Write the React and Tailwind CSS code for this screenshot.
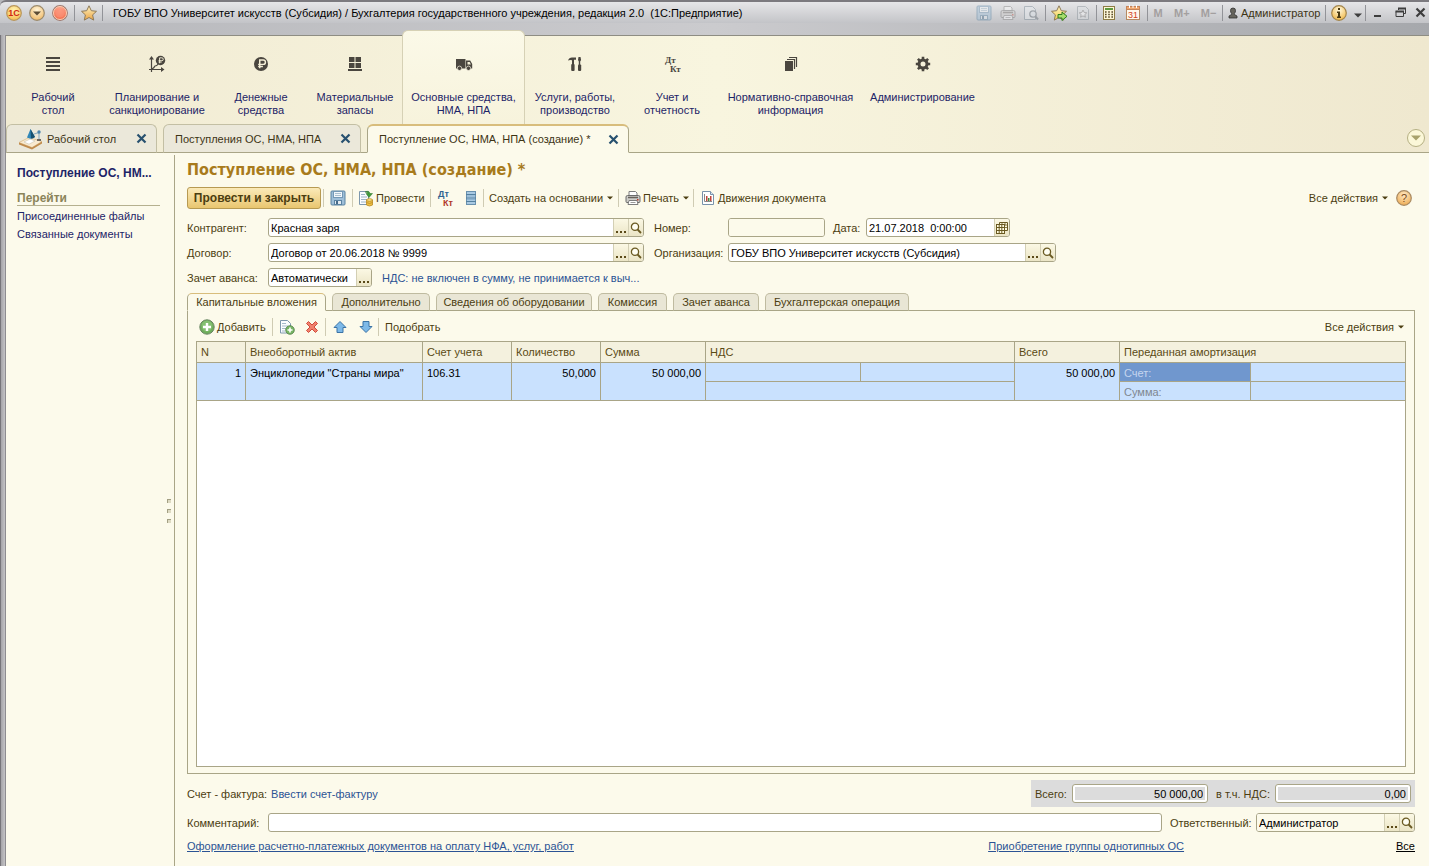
import React from "react";

const cx = (...parts) => parts.filter(Boolean).join(" ");

/* ---------- icons ---------- */

function Star({ arrow }) {
  return (
    <svg width="18" height="18" viewBox="0 0 18 18" aria-hidden="true">
      <defs>
        <linearGradient id={arrow ? "sg2" : "sg1"} x1="0" y1="0" x2="0" y2="1">
          <stop offset="0" stopColor="#fff3c0" />
          <stop offset="1" stopColor={arrow ? "#f3d050" : "#eba545"} />
        </linearGradient>
      </defs>
      <path
        d="M9 1.800l2.300 4.900 5.200.6-3.900 3.600 1.100 5.200L9 13.500l-4.700 2.600 1.100-5.200L1.500 7.300l5.200-.6z"
        fill={arrow ? "url(#sg2)" : "url(#sg1)"}
        stroke="#8e7a58"
        strokeWidth="1"
        strokeLinejoin="round"
      />
      {arrow && (
        <path d="M8 10.500h4V8l5 4.300-5 4.200V14H8z" fill="#a5dd6b" stroke="#2f7a1e" strokeLinejoin="round" />
      )}
    </svg>
  );
}

function Orb({ kind }) {
  const fills = {
    one: ["#fff3b0", "#f5b94a", "#b8955a"],
    menu: ["#fff4d8", "#efb660", "#9b8a6c"],
    red: ["#ffb09a", "#f0603e", "#9f7a70"],
    info: ["#fff8dc", "#f0b440", "#a3854c"],
    help: ["#ffe9c4", "#eda94e", "#a98a62"],
  }[kind];
  return (
    <svg width="18" height="18" viewBox="0 0 18 18" aria-hidden="true">
      <defs>
        <radialGradient id={"orb-" + kind} cx="0.5" cy="0.3" r="0.75">
          <stop offset="0" stopColor={fills[0]} />
          <stop offset="1" stopColor={fills[1]} />
        </radialGradient>
      </defs>
      <circle cx="9" cy="9" r="7.300" fill={"url(#orb-" + kind + ")"} stroke={fills[2]} strokeWidth="1.200" />
      {kind === "one" && (
        <text x="9" y="12" textAnchor="middle" fontSize="9" fontWeight="bold" fontFamily="Liberation Sans, sans-serif" fill="#d22a12">
          1С
        </text>
      )}
      {kind === "menu" && <path d="M5 7.500h8L9 11.500z" fill="#5c4c34" />}
      {kind === "red" && (
        <g>
          <circle cx="9" cy="9" r="6.500" fill="none" stroke="#f9d0b4" />
          <circle cx="9" cy="9" r="4.500" fill="#fb8f74" opacity="0.7" />
        </g>
      )}
      {kind === "info" && (
        <g fill="#4a3a12">
          <rect x="8" y="4" width="2" height="2" />
          <path d="M7 7.500h3V12.500h1V14H7v-1.500h1V9H7z" />
        </g>
      )}
      {kind === "help" && (
        <text x="9" y="13" textAnchor="middle" fontSize="11" fontFamily="Liberation Sans, sans-serif" fill="#7a4a20">
          ?
        </text>
      )}
    </svg>
  );
}

function Floppy({ muted }) {
  return (
    <svg width="16" height="16" viewBox="0 0 16 16" opacity={muted ? 0.45 : 1} aria-hidden="true">
      <rect x="1" y="1" width="14" height="14" rx="1" fill="#9fbfd8" stroke="#5b84a3" />
      <rect x="3.500" y="1.500" width="9" height="6" fill="#f2f7fb" stroke="#7398b5" />
      <path d="M5 3.500h6M5 5.500h6" stroke="#a9bfce" />
      <rect x="4.500" y="10.500" width="7" height="4" fill="#e3ebf2" stroke="#5b84a3" />
      <rect x="6" y="11" width="2" height="3" fill="#466a88" />
    </svg>
  );
}

function Printer({ muted }) {
  return (
    <svg width="16" height="16" viewBox="0 0 16 16" opacity={muted ? 0.4 : 1} aria-hidden="true">
      <path d="M4 6V1.500h6.500L12 3v3" fill="#fff" stroke="#7d7d7d" />
      <path d="M1 7Q1 5.500 2.500 5.500h11Q15 5.500 15 7v4.500q0 1-1 1H2q-1 0-1-1z" fill="#cdccc8" stroke="#6b6b6b" />
      <path d="M3 7.500h10" stroke="#66625c" strokeWidth="1.500" />
      <path d="M4 10.500h8l1 4H3z" fill="#fff" stroke="#7d7d7d" />
      <path d="M5.500 12.500h5" stroke="#9b9b9b" />
      <rect x="12" y="9" width="1.500" height="1.500" fill="#c03a2b" />
    </svg>
  );
}

function Preview() {
  return (
    <svg width="16" height="16" viewBox="0 0 16 16" opacity="0.4" aria-hidden="true">
      <path d="M1.500 1.500h8l3 3v10h-11z" fill="#e9eef2" stroke="#6d7f8c" />
      <circle cx="10" cy="9" r="3.200" fill="#dfe7ee" stroke="#545f68" strokeWidth="1.300" />
      <path d="M12.300 11.300L15 14.500" stroke="#545f68" strokeWidth="2" />
    </svg>
  );
}

function StarPage() {
  return (
    <svg width="14" height="16" viewBox="0 0 14 16" opacity="0.4" aria-hidden="true">
      <path d="M1.500 1.500h8l3 3v10h-11z" fill="#dde1e4" stroke="#7b868e" />
      <path d="M7 5l1.200 2.500 2.600.3-2 1.800.6 2.600L7 10.900l-2.400 1.300.6-2.600-2-1.800 2.600-.3z" fill="#fff" stroke="#777" />
    </svg>
  );
}

function Calculator() {
  return (
    <svg width="14" height="16" viewBox="0 0 14 16" aria-hidden="true">
      <rect x="1.500" y="1.500" width="11" height="13" fill="#fdf6d8" stroke="#8e7c45" />
      <rect x="3" y="3" width="8" height="2" fill="#5f9a40" />
      <path d="M3 7h8M3 9.500h8M3 12h8" stroke="#5a4a28" strokeWidth="1.300" strokeDasharray="1.600 1.600" />
    </svg>
  );
}

function CalendarDay() {
  return (
    <svg width="14" height="16" viewBox="0 0 14 16" aria-hidden="true">
      <rect x="0.500" y="1.500" width="13" height="13" fill="#fff8ec" stroke="#b58a62" />
      <rect x="0.500" y="1.500" width="13" height="3" fill="#f0a870" stroke="#c5845a" />
      <path d="M3.500 0v3M7 0v3M10.500 0v3" stroke="#fff" />
      <text x="7" y="13" textAnchor="middle" fontSize="9" fontFamily="Liberation Sans, sans-serif" fill="#d0411c">
        31
      </text>
    </svg>
  );
}

function Person() {
  return (
    <svg width="10" height="12" viewBox="0 0 10 12" aria-hidden="true">
      <path d="M5 1a2.500 2.500 0 0 1 2.500 2.700C7.500 5 7 5.800 6.400 6.400V7.500L9 9v2H1V9l2.600-1.500V6.400C3 5.800 2.500 5 2.500 3.700A2.500 2.500 0 0 1 5 1z" fill="#66645c" stroke="#333" strokeWidth="0.800" />
    </svg>
  );
}

function Caret({ className }) {
  return (
    <svg width="6" height="4" viewBox="0 0 6 4" className={className} aria-hidden="true">
      <path d="M0 0.500h6L3 3.500z" fill="currentColor" />
    </svg>
  );
}

function Cross({ className, size = 11 }) {
  return (
    <svg width={size} height={size} viewBox="0 0 11 11" className={className} aria-hidden="true">
      <path d="M1.500 1.500l8 8M9.500 1.500l-8 8" stroke="currentColor" strokeWidth="2.200" />
    </svg>
  );
}

function Magnifier() {
  return (
    <svg width="12" height="12" viewBox="0 0 12 12" aria-hidden="true">
      <circle cx="5" cy="4.800" r="3.600" fill="#fffef2" stroke="#6a5a22" strokeWidth="1.300" />
      <path d="M7.600 7.500L11 11" stroke="#6a5a22" strokeWidth="1.800" />
    </svg>
  );
}

function CalendarGrid() {
  return (
    <svg width="12" height="12" viewBox="0 0 12 12" aria-hidden="true">
      <path d="M3.500 3V0.500h8v8H9" fill="#fffbe0" stroke="#6a5a22" />
      <path d="M6 0.500V3M9 0.500v3M9 3h2.500M9 5.500h2.500" stroke="#6a5a22" strokeWidth="0.800" />
      <rect x="0.500" y="2.500" width="8" height="9" fill="#fffbe0" stroke="#6a5a22" />
      <path d="M0.500 5.500h8M0.500 8.500h8M3.200 2.500v9M5.800 2.500v9" stroke="#6a5a22" />
    </svg>
  );
}

function LinesIcon() {
  return (
    <svg width="16" height="16" viewBox="0 0 16 16" aria-hidden="true">
      <path d="M1 2h14M1 6h14M1 10h14M1 14h14" stroke="#4a463f" strokeWidth="2" />
    </svg>
  );
}

function Rouble({ x, y, s }) {
  return (
    <path
      transform={`translate(${x} ${y}) scale(${s})`}
      d="M5 11V3h3.300a2 2 0 0 1 0 4.200H3.500M3.500 9.200H8"
      fill="none"
      stroke="#f6f0d8"
      strokeWidth="1.400"
    />
  );
}

function PlanIcon() {
  return (
    <svg width="18" height="18" viewBox="0 0 18 18" aria-hidden="true">
      <path d="M3.500 3v14M1 14.500h13M4 14q2-1 3-3 2 0 4-3" fill="none" stroke="#4a463f" strokeWidth="1.200" />
      <path d="M1 4.500L3.500 1 6 4.500zM13 12l3.500 2.500L13 17z" fill="#4a463f" />
      <circle cx="12.500" cy="5.500" r="4.700" fill="#4a463f" />
      <Rouble x="8.200" y="0.800" s="0.680" />
    </svg>
  );
}

function MoneyIcon() {
  return (
    <svg width="16" height="16" viewBox="0 0 16 16" aria-hidden="true">
      <circle cx="8" cy="8" r="7" fill="#4a463f" />
      <Rouble x="1.500" y="0.800" s="1.050" />
    </svg>
  );
}

function StockIcon() {
  return (
    <svg width="16" height="16" viewBox="0 0 16 16" aria-hidden="true">
      <path d="M2 1h5.500v5H2zM8.500 1H14v5H8.500zM2 7h5.500v5H2zM8.500 7H14v5H8.500zM1 13h14v2H1z" fill="#4a463f" />
    </svg>
  );
}

function TruckIcon() {
  return (
    <svg width="18" height="16" viewBox="0 0 18 16" aria-hidden="true">
      <path d="M1 3h9.500v9.500H1zM11 4.500h4.200l2 3.500v4.500H11z" fill="#4a463f" />
      <path d="M12.500 6h2.200l1.200 2.500h-3.400z" fill="#f6f2da" />
      <g fill="#4a463f" stroke="#faf7e4" strokeWidth="0.700">
        <circle cx="4.500" cy="12.300" r="2.200" />
        <circle cx="13.500" cy="12.300" r="2.200" />
      </g>
    </svg>
  );
}

function ToolsIcon() {
  return (
    <svg width="16" height="16" viewBox="0 0 16 16" aria-hidden="true">
      <path d="M1 4.500q1-3 4-3h4v2.300H7V9H5V4.300Q3 3.500 1 4.500z" fill="#4a463f" />
      <rect x="4.200" y="8" width="3.400" height="7" rx="1" fill="#4a463f" />
      <path d="M11.500 1h2l.6 3-.9 1.500V9h-1.400V5.500L11 4z" fill="#4a463f" />
      <rect x="11" y="8.500" width="3.200" height="6.500" rx="1" fill="#4a463f" />
    </svg>
  );
}

function DebitCredit({ colored }) {
  return (
    <svg width="18" height="18" viewBox="0 0 18 18" aria-hidden="true">
      <g fontSize="9" fontWeight="bold" fontFamily={colored ? "Liberation Sans, sans-serif" : "Liberation Serif, serif"}>
        <text x="2" y="8" fill={colored ? "#2f6291" : "#4a463f"}>Дт</text>
        <text x="7" y="17" fill={colored ? "#b1362a" : "#4a463f"}>Кт</text>
      </g>
    </svg>
  );
}

function BooksIcon() {
  return (
    <svg width="16" height="16" viewBox="0 0 16 16" aria-hidden="true">
      <rect x="2" y="5" width="8" height="10" fill="#4a463f" />
      <path d="M4 3.500h7.500V13M6 1.500h7.500V11" fill="none" stroke="#4a463f" strokeWidth="1.200" />
    </svg>
  );
}

function GearIcon() {
  return (
    <svg width="16" height="16" viewBox="0 0 16 16" aria-hidden="true">
      <circle cx="8" cy="8" r="4" fill="none" stroke="#4a463f" strokeWidth="3" />
      <path
        d="M8 0.800v2.500M8 12.700v2.500M0.800 8h2.500M12.700 8h2.500M2.900 2.900l1.800 1.800M11.300 11.300l1.800 1.800M2.900 13.100l1.800-1.800M11.300 4.700l1.800-1.800"
        stroke="#4a463f"
        strokeWidth="2.600"
      />
    </svg>
  );
}

function DeskIcon() {
  return (
    <svg width="26" height="22" viewBox="0 0 26 22" aria-hidden="true">
      <path d="M1 14.500L11 9.500l13 4-10 6z" fill="#f9ead0" stroke="#d8bb8a" strokeWidth="0.800" />
      <path d="M1 14.500v2l13 5v-2zM24 13.500v2l-10 6v-2z" fill="#c08b4c" />
      <path d="M6 14l6-3 5 2-6 3.200z" fill="#fff" stroke="#c8c2ae" strokeWidth="0.600" />
      <path d="M9 9.500L12.500 1 17 9q-4 3-8 .5z" fill="#2f86b8" />
      <path d="M12.500 1L17 9q-2 1.500-4 1.500z" fill="#17506f" />
      <path d="M16 6l5-1.500v7" fill="none" stroke="#8fb0c4" strokeWidth="1.200" />
      <circle cx="21" cy="4" r="1.700" fill="#4d86ad" />
      <path d="M19 11h4v2h-4z" fill="#6d675e" />
    </svg>
  );
}

function PostIcon() {
  return (
    <svg width="16" height="17" viewBox="0 0 16 17" aria-hidden="true">
      <path d="M1.500 1.500h9v13h-9z" fill="#fafcff" stroke="#7d97ad" />
      <path d="M3 4.500h4M3 7h6M3 9.500h6M3 12h5" stroke="#9db4c6" />
      <path d="M7 2q4-2 5 1.500h2.500L11 7.500 8 3.500h2Q9.500 2 7 2z" fill="#3f9a3a" stroke="#2d7029" strokeWidth="0.500" />
      <path d="M8.500 10v5q3 2 6 0v-5z" fill="#eec045" stroke="#b98a22" strokeWidth="0.800" />
      <ellipse cx="11.500" cy="10" rx="3" ry="1.300" fill="#fbe389" stroke="#b98a22" strokeWidth="0.800" />
      <path d="M8.500 12.500q3 2 6 0" fill="none" stroke="#b98a22" strokeWidth="0.800" />
    </svg>
  );
}

function RegisterIcon() {
  return (
    <svg width="12" height="16" viewBox="0 0 12 16" aria-hidden="true">
      <rect x="1.500" y="1.500" width="9" height="13" fill="#a9c9e2" stroke="#6a91ae" />
      <path d="M1 4.500h10M1 8h10M1 11.500h10" stroke="#54809f" />
      <path d="M2 6h8M2 9.500h8" stroke="#8fb4d0" />
    </svg>
  );
}

function ReportIcon() {
  return (
    <svg width="14" height="16" viewBox="0 0 14 16" aria-hidden="true">
      <path d="M1.500 1.500h8l3 3v10h-11z" fill="#fff" stroke="#7893ab" />
      <path d="M9.500 1.500v3h3" fill="#dbe7f0" stroke="#7893ab" />
      <path d="M3.500 4v7.500h7.500" fill="none" stroke="#888" />
      <path d="M5 6h1.500v5H5z" fill="#c1443a" />
      <path d="M7 8h1.500v3H7z" fill="#418a3e" />
      <path d="M9 6h1.500v5H9z" fill="#c1443a" />
    </svg>
  );
}

function AddIcon() {
  return (
    <svg width="16" height="16" viewBox="0 0 16 16" aria-hidden="true">
      <circle cx="8" cy="8" r="7.200" fill="#6fae5c" stroke="#6a8563" />
      <circle cx="8" cy="7" r="5.500" fill="#93c97f" opacity="0.6" />
      <path d="M8 4v8M4 8h8" stroke="#fff" strokeWidth="2.400" />
    </svg>
  );
}

function CopyAddIcon() {
  return (
    <svg width="16" height="16" viewBox="0 0 16 16" aria-hidden="true">
      <path d="M1.500 1.500h7l3 3v9.500h-10z" fill="#fbfdff" stroke="#7d97ad" />
      <path d="M3 4.500h4M3 7h6M3 9.500h4M3 12h3" stroke="#a5bacb" />
      <circle cx="11" cy="11" r="4.300" fill="#78b565" stroke="#4f7f45" strokeWidth="0.800" />
      <path d="M11 8.500v5M8.500 11h5" stroke="#fff" strokeWidth="1.600" />
    </svg>
  );
}

function DeleteIcon() {
  return (
    <svg width="14" height="14" viewBox="0 0 14 14" aria-hidden="true">
      <path d="M1.500 3.500l2-2L7 5l3.500-3.500 2 2L9 7l3.500 3.500-2 2L7 9l-3.500 3.500-2-2L5 7z" fill="#f0806c" stroke="#cf4a3c" strokeLinejoin="round" />
    </svg>
  );
}

function ArrowIcon({ down }) {
  return (
    <svg width="14" height="14" viewBox="0 0 14 14" className={down ? "rotate-180" : ""} aria-hidden="true">
      <path d="M7 1.500l6 6h-3v5H4v-5H1z" fill="#7db9e8" stroke="#3b73a6" strokeLinejoin="round" />
    </svg>
  );
}

/* ---------- small building blocks ---------- */

function BarSep() {
  return <span className="h-4 w-px shrink-0 bg-[#929398]" />;
}

function ToolSep({ className }) {
  return <span className={cx("h-[18px] w-px shrink-0 bg-[#cfcbb3]", className)} />;
}

function IconButton({ label, children, className }) {
  return (
    <button type="button" aria-label={label} className={cx("flex shrink-0 items-center justify-center", className)}>
      {children}
    </button>
  );
}

function Field({ id, value, className, inputClass, more, search, calendar, readOnly }) {
  const side =
    "flex w-[15px] shrink-0 items-center justify-center border-l border-[#d3cfb4] bg-linear-to-b from-[#fbf8e4] to-[#ebe5c6]";
  return (
    <div className={cx("flex h-[19px] overflow-hidden rounded-[3px] border border-[#a9a587] bg-white", className)}>
      <input id={id} defaultValue={value} readOnly={readOnly} className={cx("min-w-0 flex-1 px-[2px] text-black outline-none", inputClass)} />
      {more && (
        <button type="button" aria-label="Выбрать" className={side}>
          <svg width="10" height="12" viewBox="0 0 10 12" aria-hidden="true">
            <path d="M0 9h2v2H0zM4 9h2v2H4zM8 9h2v2H8z" fill="#5b4a18" />
          </svg>
        </button>
      )}
      {search && (
        <button type="button" aria-label="Открыть" className={side}>
          <Magnifier />
        </button>
      )}
      {calendar && (
        <button type="button" aria-label="Календарь" className={side}>
          <CalendarGrid />
        </button>
      )}
    </div>
  );
}

/* ---------- page parts ---------- */

function TitleBar() {
  return (
    <header className="flex h-[35px] flex-col bg-linear-to-r from-[#b6b7bb] via-[#cbcbce] to-[#a6a8ac]">
      <div className="flex h-[23px] items-center rounded-tl-md border-t-2 border-[#7c7a7f] bg-linear-to-b from-[#e6e6e8] to-[#c3c4c8] pl-[2px]">
        <IconButton label="Главное меню" className="w-[23px]"><Orb kind="one" /></IconButton>
        <IconButton label="Меню" className="w-[23px]"><Orb kind="menu" /></IconButton>
        <IconButton label="Закрыть приложение" className="w-[23px]"><Orb kind="red" /></IconButton>
        <span className="w-[3px]" />
        <BarSep />
        <IconButton label="Избранное" className="w-[27px]"><Star /></IconButton>
        <BarSep />
        <h1 className="flex-1 truncate pl-[10px] whitespace-pre text-black">
          ГОБУ ВПО Университет искусств (Субсидия) / Бухгалтерия государственного учреждения, редакция 2.0{"  "}(1С:Предприятие)
        </h1>
        <IconButton label="Сохранить" className="w-6"><Floppy muted /></IconButton>
        <IconButton label="Печать" className="w-6"><Printer muted /></IconButton>
        <IconButton label="Просмотр" className="mr-[3px] w-[22px]"><Preview /></IconButton>
        <BarSep />
        <IconButton label="Добавить в избранное" className="w-[26px]"><Star arrow /></IconButton>
        <IconButton label="Ссылка" className="mr-[2px] w-[22px]"><StarPage /></IconButton>
        <BarSep />
        <IconButton label="Калькулятор" className="w-[24px]"><Calculator /></IconButton>
        <IconButton label="Календарь" className="mr-[2px] w-[24px]"><CalendarDay /></IconButton>
        <BarSep />
        <div className="flex w-[74px] items-center justify-around font-bold text-[#a39f9f]">
          <button type="button">M</button>
          <button type="button">M+</button>
          <button type="button">M−</button>
        </div>
        <BarSep />
        <button type="button" className="flex w-[102px] items-center gap-[3px] pl-[5px] text-[#3d3415]">
          <Person />
          Администратор
        </button>
        <BarSep />
        <IconButton label="Информация" className="w-[25px]"><Orb kind="info" /></IconButton>
        <IconButton label="Ещё" className="w-[14px] pt-[6px] text-[#3d3d3d]">
          <svg width="8" height="5" viewBox="0 0 8 5" aria-hidden="true"><path d="M0 0.500h8L4 4.500z" fill="currentColor" /></svg>
        </IconButton>
        <BarSep />
        <IconButton label="Свернуть" className="w-[23px]">
          <svg width="8" height="8" viewBox="0 0 8 8" aria-hidden="true"><path d="M0 7h7" stroke="#3d3d3d" strokeWidth="2" /></svg>
        </IconButton>
        <IconButton label="Восстановить" className="w-[23px]">
          <svg width="12" height="11" viewBox="0 0 12 11" aria-hidden="true">
            <path d="M3.500 3V1.500h7v5H9M1 4.500h7.500v5H1z" fill="none" stroke="#3d3d3d" />
            <path d="M3 1.500h8M0.500 4.500h8.500" stroke="#3d3d3d" strokeWidth="2" />
          </svg>
        </IconButton>
        <IconButton label="Закрыть" className="w-[17px] text-[#3d3d3d]"><Cross /></IconButton>
      </div>
    </header>
  );
}

const sections = [
  { icon: <LinesIcon />, lines: ["Рабочий", "стол"], width: "w-[94px]" },
  { icon: <PlanIcon />, lines: ["Планирование и", "санкционирование"], width: "w-[114px]" },
  { icon: <MoneyIcon />, lines: ["Денежные", "средства"], width: "w-[94px]" },
  { icon: <StockIcon />, lines: ["Материальные", "запасы"], width: "w-[94px]" },
  { icon: <TruckIcon />, lines: ["Основные средства,", "НМА, НПА"], width: "w-[123px]", active: true },
  { icon: <ToolsIcon />, lines: ["Услуги, работы,", "производство"], width: "w-[100px]" },
  { icon: <DebitCredit />, lines: ["Учет и", "отчетность"], width: "w-[94px]" },
  { icon: <BooksIcon />, lines: ["Нормативно-справочная", "информация"], width: "w-[143px]" },
  { icon: <GearIcon />, lines: ["Администрирование"], width: "w-[121px]" },
];

function Ribbon() {
  return (
    <nav className="flex h-[89px] border-t border-[#8e8d83] bg-linear-to-r from-[#f1ebd3] via-[#f8f5df] to-[#efe8cf]">
      {sections.map((s) => (
        <a
          key={s.lines[0]}
          href="#"
          className={cx(
            "-mt-[6px] flex shrink-0 flex-col items-center rounded-t-[6px] border pt-[23px] text-center whitespace-nowrap text-[#1d2467]",
            s.width,
            s.active
              ? "border-b-0 border-[#d6d1b5] bg-linear-to-b from-[#fbf9e8] to-[#f7f3dc]"
              : "border-transparent"
          )}
        >
          <span className="flex h-[20px] items-center justify-center">{s.icon}</span>
          <span className="mt-[17px] leading-[13px]">
            {s.lines.map((l) => (
              <span key={l} className="block">{l}</span>
            ))}
          </span>
        </a>
      ))}
    </nav>
  );
}

function DocTab({ width, icon, title, active }) {
  return (
    <div
      className={cx(
        "flex h-full shrink-0 items-center justify-between rounded-t-[6px] border pr-[9px] pl-[11px] text-[#3d3415]",
        width,
        active
          ? "border-t-2 border-[#a9a587] border-t-[#d8bd7c] border-b-[#fcfaeb] bg-[#fcfaeb]"
          : "border-[#c3bfa4] border-b-[#a9a587] bg-[#ebe8da]"
      )}
    >
      <button type="button" className="flex items-center gap-[3px] whitespace-nowrap">
        {icon}
        {title}
      </button>
      <IconButton label="Закрыть вкладку" className="text-[#27506f]"><Cross /></IconButton>
    </div>
  );
}

function DocTabs() {
  return (
    <div className="flex h-[29px] bg-linear-to-r from-[#f1ebd3] via-[#f8f5df] to-[#efe8cf]">
      <DocTab width="w-[151px]" icon={<DeskIcon />} title="Рабочий стол" />
      <span className="w-[6px] border-b border-[#a9a587]" />
      <DocTab width="w-[198px]" title="Поступления ОС, НМА, НПА" />
      <span className="w-[6px] border-b border-[#a9a587]" />
      <DocTab width="w-[262px]" title="Поступление ОС, НМА, НПА (создание) *" active />
      <div className="flex flex-1 items-center justify-end border-b border-[#a9a587] pr-[4px]">
        <button
          type="button"
          aria-label="Список окон"
          className="flex h-[18px] w-[18px] items-center justify-center rounded-full border border-[#b5b083] bg-[#fbf7d8] text-[#a8a26c]"
        >
          <svg width="10" height="6" viewBox="0 0 10 6" aria-hidden="true"><path d="M0 0.500h10L5 5.500z" fill="currentColor" /></svg>
        </button>
      </div>
    </div>
  );
}

function Sidebar() {
  return (
    <aside className="mt-[2px] flex w-[169px] shrink-0 border-r border-[#a9a587] pl-[11px] text-[#1d2467]">
      <div className="flex-1 pt-[10px]">
        <div className="w-[143px] whitespace-nowrap">
          <a href="#" className="block text-[12px] leading-[16px] font-bold">Поступление ОС, НМ...</a>
          <h2 className="mt-[11px] border-b border-[#b5b08f] text-[12px] leading-[13px] font-bold text-[#8b8459]">Перейти</h2>
        </div>
        <a href="#" className="mt-px block leading-[18px]">Присоединенные файлы</a>
        <a href="#" className="block leading-[18px]">Связанные документы</a>
      </div>
      <div className="flex w-[7px] flex-col justify-center gap-[6px]">
        <span className="h-1 w-1 border-t border-l border-[#a39f83] bg-[#dedac2]" />
        <span className="h-1 w-1 border-t border-l border-[#a39f83] bg-[#dedac2]" />
        <span className="h-1 w-1 border-t border-l border-[#a39f83] bg-[#dedac2]" />
      </div>
    </aside>
  );
}

function Toolbar() {
  return (
    <div className="flex h-[22px] items-center text-[#4b3d10]">
      <button
        type="button"
        className="h-full w-[134px] rounded-[3px] border border-[#b79a52] bg-linear-to-b from-[#fbeab8] to-[#e9c66f] text-[12px] font-bold whitespace-nowrap"
      >
        Провести и закрыть
      </button>
      <ToolSep className="ml-[2px]" />
      <IconButton label="Записать" className="w-[28px]"><Floppy /></IconButton>
      <ToolSep />
      <button type="button" className="flex w-[77px] items-center gap-[2px] pl-[5px] whitespace-nowrap">
        <PostIcon />
        Провести
      </button>
      <ToolSep />
      <IconButton label="Проводки" className="w-[28px]"><DebitCredit colored /></IconButton>
      <IconButton label="Регистр" className="w-[24px]"><RegisterIcon /></IconButton>
      <ToolSep />
      <button type="button" className="flex w-[134px] items-center gap-[4px] pl-[5px] whitespace-nowrap">
        Создать на основании
        <Caret />
      </button>
      <ToolSep />
      <button type="button" className="flex w-[74px] items-center gap-[2px] pl-[6px] whitespace-nowrap">
        <Printer />
        Печать
        <Caret className="ml-[2px]" />
      </button>
      <ToolSep />
      <button type="button" className="flex items-center gap-[3px] pl-[7px] whitespace-nowrap">
        <ReportIcon />
        Движения документа
      </button>
      <button type="button" className="ml-auto flex items-center gap-[4px] whitespace-nowrap">
        Все действия
        <Caret />
      </button>
      <IconButton label="Справка" className="mr-[2px] ml-[7px]"><Orb kind="help" /></IconButton>
    </div>
  );
}

function HeaderForm() {
  return (
    <div className="mt-[9px] flex flex-col gap-[6px] whitespace-nowrap text-[#4b3d10]">
      <div className="flex items-center">
        <label htmlFor="partner" className="w-[81px]">Контрагент:</label>
        <Field id="partner" value="Красная заря" className="w-[376px]" more search />
        <label htmlFor="number" className="ml-[10px] w-[74px]">Номер:</label>
        <Field id="number" value="" className="w-[97px]" inputClass="bg-[#fcfaeb]" />
        <label htmlFor="date" className="ml-[8px] w-[33px]">Дата:</label>
        <Field id="date" value="21.07.2018  0:00:00" className="w-[144px]" calendar />
      </div>
      <div className="flex items-center">
        <label htmlFor="contract" className="w-[81px]">Договор:</label>
        <Field id="contract" value="Договор от 20.06.2018 № 9999" className="w-[376px]" more search />
        <label htmlFor="org" className="ml-[10px] w-[74px]">Организация:</label>
        <Field id="org" value="ГОБУ ВПО Университет искусств (Субсидия)" className="w-[328px]" more search />
      </div>
      <div className="flex items-center">
        <label htmlFor="advance" className="w-[81px]">Зачет аванса:</label>
        <Field id="advance" value="Автоматически" className="w-[104px]" more />
        <a href="#" className="ml-[10px] text-[#2b5394]">НДС: не включен в сумму, не принимается к выч...</a>
      </div>
    </div>
  );
}

const formTabs = [
  { title: "Капитальные вложения", width: "w-[139px]", active: true },
  { title: "Дополнительно", width: "w-[98px]" },
  { title: "Сведения об оборудовании", width: "w-[156px]" },
  { title: "Комиссия", width: "w-[69px]" },
  { title: "Зачет аванса", width: "w-[86px]" },
  { title: "Бухгалтерская операция", width: "w-[144px]" },
];

function AssetTable() {
  const th = "h-[21px] border-r border-b border-[#a9a587] px-[4px] text-left font-normal last:border-r-0";
  const td = "h-[19px] border-r border-b border-[#a9a587] px-[4px] pt-[2px] pb-0 align-top leading-[16px] last:border-r-0";
  return (
    <div className="min-h-[200px] flex-1 border border-[#a9a587] bg-white">
      <table className="w-full table-fixed border-separate border-spacing-0 whitespace-nowrap">
        <colgroup>
          <col className="w-[49px]" />
          <col className="w-[177px]" />
          <col className="w-[89px]" />
          <col className="w-[89px]" />
          <col className="w-[105px]" />
          <col className="w-[155px]" />
          <col className="w-[154px]" />
          <col className="w-[105px]" />
          <col className="w-[131px]" />
          <col />
        </colgroup>
        <thead className="bg-[#f4f1de] text-[#5a4a14]">
          <tr>
            <th className={th}>N</th>
            <th className={th}>Внеоборотный актив</th>
            <th className={th}>Счет учета</th>
            <th className={th}>Количество</th>
            <th className={th}>Сумма</th>
            <th className={th} colSpan={2}>НДС</th>
            <th className={th}>Всего</th>
            <th className={th} colSpan={2}>Переданная амортизация</th>
          </tr>
        </thead>
        <tbody className="bg-[#c9e1fe] text-black">
          <tr>
            <td rowSpan={2} className={cx(td, "text-right")}>1</td>
            <td rowSpan={2} className={td}>Энциклопедии "Страны мира"</td>
            <td rowSpan={2} className={td}>106.31</td>
            <td rowSpan={2} className={cx(td, "text-right")}>50,000</td>
            <td rowSpan={2} className={cx(td, "text-right")}>50 000,00</td>
            <td className={td} />
            <td className={td} />
            <td rowSpan={2} className={cx(td, "text-right")}>50 000,00</td>
            <td className={cx(td, "bg-[#7097ce] text-[#c5d5ee]")}>Счет:</td>
            <td className={td} />
          </tr>
          <tr>
            <td colSpan={2} className={td} />
            <td className={cx(td, "text-[#7f8790]")}>Сумма:</td>
            <td className={td} />
          </tr>
        </tbody>
      </table>
    </div>
  );
}

function TabPanel() {
  return (
    <section className="mt-[6px] flex flex-1 flex-col">
      <div className="flex h-[18px] gap-[6px]">
        {formTabs.map((t) => (
          <button
            key={t.title}
            type="button"
            className={cx(
              "z-10 shrink-0 rounded-t-[5px] border whitespace-nowrap text-[#4b3d10]",
              t.width,
              t.active
                ? "border-[#a9a587] border-t-[#d8bd7c] border-b-[#fcfaeb] bg-[#fcfaeb]"
                : "border-[#bfbba0] border-b-[#a9a587] bg-[#e9e6d5]"
            )}
          >
            {t.title}
          </button>
        ))}
      </div>
      <div className="-mt-px flex flex-1 flex-col border border-[#a9a587] px-[8px] pb-[6px]">
        <div className="flex h-[30px] items-center pt-[2px] text-[#4b3d10]">
          <button type="button" className="flex w-[76px] items-center gap-[2px] pl-[3px] whitespace-nowrap">
            <AddIcon />
            Добавить
          </button>
          <ToolSep />
          <IconButton label="Скопировать" className="w-[28px]"><CopyAddIcon /></IconButton>
          <IconButton label="Удалить" className="mr-[3px] w-[21px]"><DeleteIcon /></IconButton>
          <ToolSep />
          <IconButton label="Переместить вверх" className="w-[27px]"><ArrowIcon /></IconButton>
          <IconButton label="Переместить вниз" className="w-[25px]"><ArrowIcon down /></IconButton>
          <ToolSep />
          <button type="button" className="pl-[6px]">Подобрать</button>
          <button type="button" className="ml-auto flex items-center gap-[4px] pr-[2px] whitespace-nowrap">
            Все действия
            <Caret />
          </button>
        </div>
        <AssetTable />
      </div>
    </section>
  );
}

function Footer() {
  return (
    <footer className="whitespace-nowrap text-[#4b3d10]">
      <div className="mt-[6px] flex h-[27px] items-center">
        <span>Счет - фактура:</span>
        <a href="#" className="ml-[4px] text-[#2b5394]">Ввести счет-фактуру</a>
        <div className="ml-auto flex h-full items-center bg-[#dcdcdc] px-[4px]">
          <label htmlFor="total" className="w-[37px]">Всего:</label>
          <Field id="total" value="50 000,00" className="w-[136px] p-[2px]" inputClass="bg-[#dcdcdc] px-0 text-right" readOnly />
          <label htmlFor="vat" className="ml-[8px] w-[59px]">в т.ч. НДС:</label>
          <Field id="vat" value="0,00" className="w-[136px] p-[2px]" inputClass="bg-[#dcdcdc] px-0 text-right" readOnly />
        </div>
      </div>
      <div className="mt-[6px] flex items-center">
        <label htmlFor="comment" className="w-[81px]">Комментарий:</label>
        <Field id="comment" value="" className="flex-1" />
        <label htmlFor="owner" className="ml-[8px] w-[86px]">Ответственный:</label>
        <Field id="owner" value="Администратор" className="w-[159px]" inputClass="bg-[#fcfaeb]" more search />
      </div>
      <div className="mt-[6px] flex h-[28px] leading-[16px] text-[#2b5394] underline">
        <a href="#">Оформление расчетно-платежных документов на оплату НФА, услуг, работ</a>
        <a href="#" className="mr-[212px] ml-auto">Приобретение группы однотипных ОС</a>
        <a href="#" className="text-black">Все</a>
      </div>
    </footer>
  );
}

export default function App() {
  return (
    <div className="flex min-h-screen flex-col bg-[#fcfaeb] font-['Liberation_Sans',Arial,sans-serif] text-[11px] leading-[14px]">
      <TitleBar />
      <div className="flex flex-1">
        <div className="w-[6px] shrink-0 border-x border-l-[#77757a] border-r-[#8e8c90] bg-linear-to-r from-[#a5a4a8] to-[#c4c3c6]" />
        <div className="flex min-w-0 flex-1 flex-col">
          <Ribbon />
          <DocTabs />
          <div className="flex flex-1">
            <Sidebar />
            <main className="flex min-w-0 flex-1 flex-col pr-[14px] pl-[12px]">
              <h2 className="mt-[7px] mb-[7px] font-['DejaVu_Sans_Condensed','Noto_Sans',sans-serif] text-[16px] leading-[20px] font-bold text-[#a87b1c]">
                Поступление ОС, НМА, НПА (создание) *
              </h2>
              <Toolbar />
              <HeaderForm />
              <TabPanel />
              <Footer />
            </main>
          </div>
        </div>
      </div>
    </div>
  );
}
